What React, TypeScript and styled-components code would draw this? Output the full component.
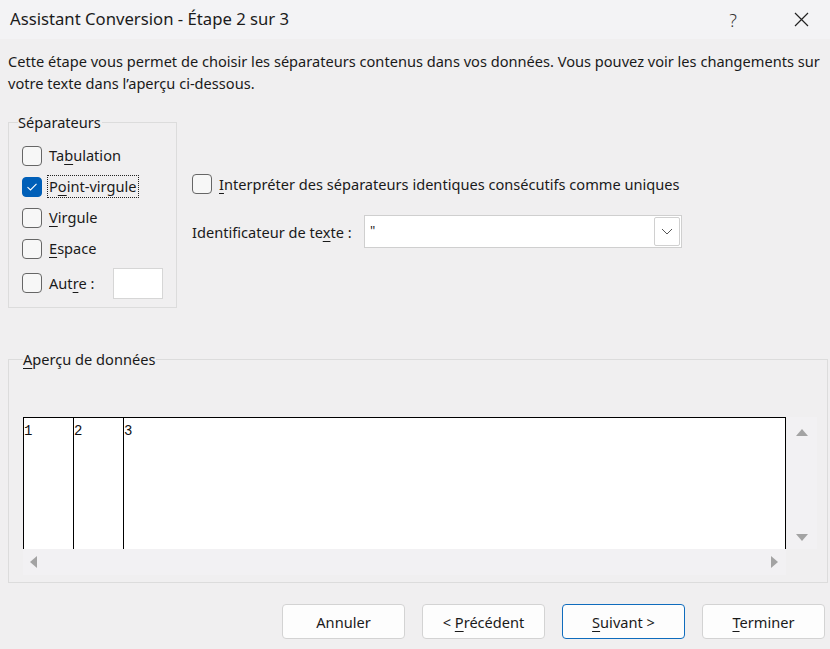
import * as React from 'react';
import styled, { createGlobalStyle } from 'styled-components';

const FONT = '"Noto Sans", "Open Sans", "DejaVu Sans", sans-serif';

const GlobalStyle = createGlobalStyle`
  html, body { margin: 0; padding: 0; background: #f0f0f0; }
  * { box-sizing: border-box; }
`;

const Window = styled.div`
  width: 830px;
  height: 649px;
  background: #f0eff0;
  font-family: ${FONT};
  font-size: 14.6px;
  color: #1a1a1a;
  display: flex;
  flex-direction: column;
  overflow: hidden;
`;

const TitleBar = styled.div`
  height: 39px;
  flex: none;
  background: #f3f3f5;
  display: flex;
  align-items: center;
  justify-content: space-between;
  padding-left: 10px;
`;

const Title = styled.div`
  font-size: 16.7px;
  color: #1b1b1b;
  margin-top: -2px;
`;

const TitleButtons = styled.div`
  display: flex;
  align-items: center;
  height: 100%;
`;

const TitleButton = styled.div<{ $width: number }>`
  width: ${p => p.$width}px;
  height: 100%;
  display: flex;
  align-items: center;
  justify-content: center;
  font-size: 18px;
  font-weight: 300;
  color: #333;
`;

const Body = styled.div`
  flex: 1;
  display: flex;
  flex-direction: column;
  padding: 11px 4px 0 8px;
`;

const Description = styled.p`
  margin: 0;
  line-height: 22px;
  white-space: nowrap;
`;

const OptionsRow = styled.div`
  display: flex;
  margin-top: 18px;
`;

const GroupBox = styled.fieldset<{ $width?: number; $height: number }>`
  margin: 0;
  width: ${p => (p.$width ? `${p.$width}px` : 'auto')};
  height: ${p => p.$height}px;
  border: 1px solid #dcdcdc;
  border-radius: 0;
  padding: 0 0 0 9px;
  min-width: 0;
`;

const Legend = styled.legend`
  padding: 0 1px 0 0;
  line-height: 20px;
  margin-left: 0;
`;

const CheckList = styled.div`
  display: flex;
  flex-direction: column;
  padding: 8px 0 0 4px;
`;

const CheckRow = styled.label<{ $height?: number }>`
  display: flex;
  align-items: center;
  gap: 6px;
  height: ${p => p.$height || 31}px;
`;

const Box = styled.span<{ $checked?: boolean }>`
  width: 20px;
  height: 20px;
  flex: none;
  border-radius: 4px;
  border: 1px solid ${p => (p.$checked ? '#005fb8' : '#666')};
  background: ${p => (p.$checked ? '#005fb8' : '#f7f7f7')};
  display: flex;
  align-items: center;
  justify-content: center;
`;

const LabelText = styled.span<{ $focused?: boolean }>`
  line-height: 21px;
  padding: 0 1px;
  outline: ${p => (p.$focused ? '1px dotted #222' : 'none')};
  white-space: nowrap;
`;

const Key = styled.u`
  text-decoration-thickness: 1px;
  text-underline-offset: 3px;
`;

const SmallInput = styled.div`
  width: 50px;
  height: 31px;
  margin-left: 12px;
  background: #fff;
  border: 1px solid #d6d6d6;
`;

const RightPane = styled.div`
  display: flex;
  flex-direction: column;
  padding: 62px 0 0 15px;
`;

const FieldRow = styled.div`
  display: flex;
  align-items: center;
  margin-top: 21px;
`;

const FieldLabel = styled.span`
  width: 172px;
  white-space: nowrap;
`;

const Select = styled.div`
  width: 318px;
  height: 33px;
  background: #fff;
  border: 1px solid #cfcfcf;
  display: flex;
  align-items: stretch;
  justify-content: space-between;
  padding: 1px;
`;

const SelectValue = styled.span`
  padding: 4px 0 0 4px;
  font-size: 13px;
  color: #222;
`;

const DropButton = styled.span`
  width: 26px;
  border: 1px solid #d0d0d0;
  border-radius: 2px;
  display: flex;
  align-items: center;
  justify-content: center;
`;

const PreviewGroup = styled(GroupBox)`
  margin-top: 41px;
  margin-right: 0;
  width: 820px;
  padding: 0 10px 0 14px;
  display: flex;
  flex-direction: column;
`;

const PreviewArea = styled.div`
  margin-top: 48px;
  display: grid;
  grid-template-columns: 763px 1fr;
  grid-template-rows: 132px 26px;
`;

const DataGrid = styled.div`
  background: #fff;
  border: 1px solid #000;
  border-bottom: none;
  display: flex;
  overflow: hidden;
`;

const DataColumn = styled.div<{ $last?: boolean }>`
  width: ${p => (p.$last ? 'auto' : '50px')};
  flex: ${p => (p.$last ? 1 : 'none')};
  border-right: ${p => (p.$last ? 'none' : '1px solid #000')};
  font-family: "Liberation Mono", "DejaVu Sans Mono", monospace;
  font-size: 14px;
  line-height: 22px;
  padding-top: 2px;
  color: #111;
`;

const VScroll = styled.div`
  background: #f2f1f3;
  display: flex;
  flex-direction: column;
  justify-content: space-between;
  align-items: center;
  padding: 12px 0 8px 0;
  margin-left: 1px;
`;

const HScroll = styled.div`
  background: #f2f1f3;
  display: flex;
  justify-content: space-between;
  align-items: center;
  padding: 0 8px 0 7px;
`;

const Arrow = styled.span<{ $dir: 'up' | 'down' | 'left' | 'right' }>`
  width: 0;
  height: 0;
  border-style: solid;
  border-color: transparent;
  ${p =>
    p.$dir === 'up'
      ? 'border-width: 0 6px 7px 6px; border-bottom-color: #a3a3a3;'
      : p.$dir === 'down'
      ? 'border-width: 7px 6px 0 6px; border-top-color: #a3a3a3;'
      : p.$dir === 'left'
      ? 'border-width: 6px 7px 6px 0; border-right-color: #a3a3a3;'
      : 'border-width: 6px 0 6px 7px; border-left-color: #a3a3a3;'}
`;

const Footer = styled.div`
  display: flex;
  justify-content: flex-end;
  gap: 17px;
  padding: 21px 1px 0 0;
`;

const Button = styled.button<{ $primary?: boolean }>`
  width: 123px;
  height: 35px;
  font-family: ${FONT};
  font-size: 14.6px;
  color: #1a1a1a;
  background: #fdfdfd;
  border: 1px solid ${p => (p.$primary ? '#0f6cbd' : '#d3d3d3')};
  border-radius: 4px;
  padding: 0;
`;

const CheckMark = () => (
  <svg width="12" height="10" viewBox="0 0 12 10">
    <path d="M1.5 5.2 L4.5 8 L10.5 1.8" fill="none" stroke="#fff" strokeWidth="1.1" />
  </svg>
);

const CloseIcon = () => (
  <svg width="15" height="15" viewBox="0 0 15 15">
    <path d="M1 1 L14 14 M14 1 L1 14" stroke="#222" strokeWidth="1.2" />
  </svg>
);

const Chevron = () => (
  <svg width="12" height="7" viewBox="0 0 12 7">
    <path d="M1 1 L6 6 L11 1" fill="none" stroke="#555" strokeWidth="1" />
  </svg>
);

const separators = [
  { id: 'tab', pre: 'Ta', key: 'b', post: 'ulation', checked: false },
  { id: 'semi', pre: 'P', key: 'o', post: 'int-virgule', checked: true },
  { id: 'comma', pre: '', key: 'V', post: 'irgule', checked: false },
  { id: 'space', pre: '', key: 'E', post: 'space', checked: false },
];

const App: React.FC = () => {
  return (
    <Window>
      <GlobalStyle />
      <TitleBar>
        <Title>Assistant Conversion - Étape 2 sur 3</Title>
        <TitleButtons>
          <TitleButton $width={78}>?</TitleButton>
          <TitleButton $width={58}><CloseIcon /></TitleButton>
        </TitleButtons>
      </TitleBar>
      <Body>
        <Description>
          Cette étape vous permet de choisir les séparateurs contenus dans vos données. Vous pouvez voir les changements sur
          <br />
          votre texte dans l’aperçu ci-dessous.
        </Description>

        <OptionsRow>
          <GroupBox $width={169} $height={196}>
            <Legend>Séparateurs</Legend>
            <CheckList>
              {separators.map(s => (
                <CheckRow key={s.id}>
                  <Box $checked={s.checked}>{s.checked ? <CheckMark /> : null}</Box>
                  <LabelText $focused={s.checked}>
                    {s.pre}<Key>{s.key}</Key>{s.post}
                  </LabelText>
                </CheckRow>
              ))}
              <CheckRow $height={38}>
                <Box />
                <LabelText>Aut<Key>r</Key>e :</LabelText>
                <SmallInput />
              </CheckRow>
            </CheckList>
          </GroupBox>

          <RightPane>
            <CheckRow $height={20}>
              <Box />
              <LabelText><Key>I</Key>nterpréter des séparateurs identiques consécutifs comme uniques</LabelText>
            </CheckRow>
            <FieldRow>
              <FieldLabel>Identificateur de te<Key>x</Key>te :</FieldLabel>
              <Select>
                <SelectValue>"</SelectValue>
                <DropButton><Chevron /></DropButton>
              </Select>
            </FieldRow>
          </RightPane>
        </OptionsRow>

        <PreviewGroup $height={234}>
          <Legend><Key>A</Key>perçu de données</Legend>
          <PreviewArea>
            <DataGrid>
              <DataColumn>1</DataColumn>
              <DataColumn>2</DataColumn>
              <DataColumn $last>3</DataColumn>
            </DataGrid>
            <VScroll>
              <Arrow $dir="up" />
              <Arrow $dir="down" />
            </VScroll>
            <HScroll>
              <Arrow $dir="left" />
              <Arrow $dir="right" />
            </HScroll>
          </PreviewArea>
        </PreviewGroup>

        <Footer>
          <Button>Annuler</Button>
          <Button>&lt; <Key>P</Key>récédent</Button>
          <Button $primary><Key>S</Key>uivant &gt;</Button>
          <Button><Key>T</Key>erminer</Button>
        </Footer>
      </Body>
    </Window>
  );
};

export default App;
